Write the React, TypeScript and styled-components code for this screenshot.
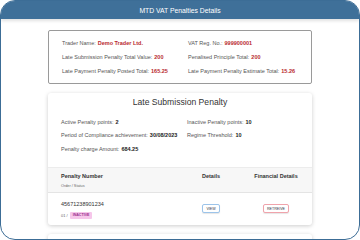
import styled, { createGlobalStyle } from "styled-components";

const GlobalStyle = createGlobalStyle`
  html, body {
    margin: 0;
    padding: 0;
    background: #ffffff;
  }
  * {
    box-sizing: border-box;
  }
`;

const Frame = styled.div`
  width: 360px;
  height: 240px;
  border: 1px solid #3c6d96;
  border-radius: 15px;
  overflow: hidden;
  display: flex;
  flex-direction: column;
  font-family: "Liberation Sans", Arial, sans-serif;
  color: #444;
  background: #fff;
`;

const Header = styled.div`
  height: 18px;
  flex-shrink: 0;
  background: #3f7099;
  color: #fff;
  font-size: 6.8px;
  display: flex;
  align-items: center;
  justify-content: center;
  box-shadow: 0 2px 3px rgba(0, 0, 0, 0.12);
  position: relative;
  z-index: 1;
`;

const Body = styled.div`
  padding: 11px 47px 0 47px;
  display: flex;
  flex-direction: column;
  gap: 9px;
`;

const Summary = styled.div`
  border: 1px solid #9a9a9a;
  border-radius: 2px;
  padding: 5px 13px 5px;
  display: grid;
  grid-template-columns: 126px 1fr;
`;

const Line = styled.div<{ $h?: number }>`
  height: ${(p) => p.$h ?? 14}px;
  display: flex;
  align-items: center;
  font-size: 5.5px;
  color: #555;
  white-space: nowrap;
`;

const Red = styled.b`
  color: #b8282e;
  margin-left: 2px;
`;

const Dark = styled.b`
  color: #222;
  margin-left: 2px;
`;

const Card = styled.div`
  background: #fff;
  border-radius: 3px;
  box-shadow: 0 1px 4px rgba(0, 0, 0, 0.2);
  flex-shrink: 0;
`;

const CardTitle = styled.div`
  text-align: center;
  font-size: 8.6px;
  color: #333;
  padding-top: 4px;
  line-height: 10px;
`;

const Stats = styled.div`
  display: grid;
  grid-template-columns: 126px 1fr;
  padding: 8px 13px 11px;
`;

const TableHead = styled.div`
  display: grid;
  grid-template-columns: 1fr 62px 68px;
  background: #f7f7f7;
  border-top: 1px solid #ececec;
  border-bottom: 1px solid #e4e4e4;
  height: 26px;
  padding: 4px 2px 0 13px;
`;

const HeadCell = styled.div<{ $center?: boolean }>`
  font-size: 5.5px;
  font-weight: bold;
  color: #333;
  text-align: ${(p) => (p.$center ? "center" : "left")};
  line-height: 8px;
`;

const SubLabel = styled.div`
  font-size: 3.8px;
  color: #666;
  font-weight: normal;
  margin-top: 2px;
`;

const TableRow = styled.div`
  display: grid;
  grid-template-columns: 1fr 62px 68px;
  align-items: center;
  height: 32px;
  padding: 0 2px 0 13px;
`;

const Number = styled.div`
  font-size: 5.5px;
  color: #333;
  margin-top: 2px;
`;

const Status = styled.div`
  font-size: 4px;
  color: #666;
  margin-top: 5px;
  display: flex;
  align-items: center;
  gap: 2px;
`;

const Badge = styled.span`
  background: #f6c6ea;
  color: #9b2f8e;
  font-weight: bold;
  font-size: 3.6px;
  padding: 1.5px 3px;
  border-radius: 1px;
`;

const Action = styled.div`
  display: flex;
  justify-content: center;
`;

const Button = styled.button<{ $tone: "blue" | "red" }>`
  font-family: inherit;
  font-size: 3.6px;
  color: #334;
  background: #fff;
  border: 1px solid ${(p) => (p.$tone === "blue" ? "#9cc4ea" : "#f0a3ab")};
  border-radius: 2px;
  height: 9px;
  padding: 0 3px;
  box-shadow: 0 1px 1px rgba(0, 0, 0, 0.1);
  cursor: pointer;
`;

const NextCard = styled(Card)`
  height: 20px;
`;

export default function App() {
  return (
    <>
      <GlobalStyle />
      <Frame>
        <Header>MTD VAT Penalties Details</Header>
        <Body>
          <Summary>
            <Line>
              Trader Name: <Red>Demo Trader Ltd.</Red>
            </Line>
            <Line>
              VAT Reg. No.: <Red>999900001</Red>
            </Line>
            <Line>
              Late Submission Penalty Total Value: <Red>200</Red>
            </Line>
            <Line>
              Penalised Principle Total: <Red>200</Red>
            </Line>
            <Line>
              Late Payment Penalty Posted Total: <Red>165.25</Red>
            </Line>
            <Line>
              Late Payment Penalty Estimate Total: <Red>15.26</Red>
            </Line>
          </Summary>
          <Card>
            <CardTitle>Late Submission Penalty</CardTitle>
            <Stats>
              <Line $h={13.5}>
                Active Penalty points: <Dark>2</Dark>
              </Line>
              <Line $h={13.5}>
                Inactive Penalty points: <Dark>10</Dark>
              </Line>
              <Line $h={13.5}>
                Period of Compliance achievement: <Dark>30/08/2023</Dark>
              </Line>
              <Line $h={13.5}>
                Regime Threshold: <Dark>10</Dark>
              </Line>
              <Line $h={13.5}>
                Penalty charge Amount: <Dark>684.25</Dark>
              </Line>
            </Stats>
            <TableHead>
              <HeadCell>
                Penalty Number
                <SubLabel>Order / Status</SubLabel>
              </HeadCell>
              <HeadCell $center>Details</HeadCell>
              <HeadCell $center>Financial Details</HeadCell>
            </TableHead>
            <TableRow>
              <div>
                <Number>45671238901234</Number>
                <Status>
                  01 / <Badge>INACTIVE</Badge>
                </Status>
              </div>
              <Action>
                <Button $tone="blue">VIEW</Button>
              </Action>
              <Action>
                <Button $tone="red">RETREIVE</Button>
              </Action>
            </TableRow>
          </Card>
          <NextCard />
        </Body>
      </Frame>
    </>
  );
}
